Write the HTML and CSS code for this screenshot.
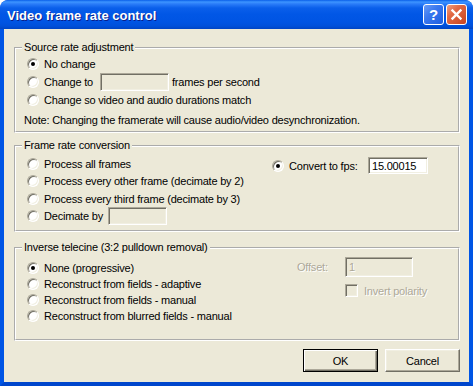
FILE: index.html
```html
<!DOCTYPE html>
<html lang="en">
<head>
    <meta charset="UTF-8">
    <title>Video frame rate control</title>
    <link rel="stylesheet" href="styles.css">
</head>
<body>
    <div class="window">
        <div class="titlebar">
            <span class="title">Video frame rate control</span>
            <div class="caption-buttons">
                <span class="cap-btn help">?</span>
                <span class="cap-btn close">
                    <svg width="21" height="21" viewBox="0 0 21 21">
                        <path d="M6.5 6.5 L14.5 14.5 M14.5 6.5 L6.5 14.5" stroke="#fff" stroke-width="2.4" stroke-linecap="square"/>
                    </svg>
                </span>
            </div>
        </div>

        <div class="client">
            <fieldset class="group source">
                <legend>Source rate adjustment</legend>
                <div class="row"><span class="radio checked"></span><span>No change</span></div>
                <div class="row">
                    <span class="radio"></span><span class="lbl change-lbl">Change to</span>
                    <span class="edit disabled change-edit"></span>
                    <span class="after">frames per second</span>
                </div>
                <div class="row"><span class="radio"></span><span>Change so video and audio durations match</span></div>
                <div class="note">Note: Changing the framerate will cause audio/video desynchronization.</div>
            </fieldset>

            <fieldset class="group conversion">
                <legend>Frame rate conversion</legend>
                <div class="cols conv-cols">
                    <div class="col">
                        <div class="row h17"><span class="radio"></span><span>Process all frames</span></div>
                        <div class="row h18"><span class="radio"></span><span>Process every other frame (decimate by 2)</span></div>
                        <div class="row h17"><span class="radio"></span><span>Process every third frame (decimate by 3)</span></div>
                        <div class="row h18">
                            <span class="radio"></span><span class="lbl decimate-lbl">Decimate by</span>
                            <span class="edit disabled decimate-edit"></span>
                        </div>
                    </div>
                    <div class="col">
                        <div class="row fps-row">
                            <span class="radio checked"></span><span class="lbl fps-lbl">Convert to fps:</span>
                            <span class="edit fps-edit">15.00015</span>
                        </div>
                    </div>
                </div>
            </fieldset>

            <fieldset class="group telecine">
                <legend>Inverse telecine (3:2 pulldown removal)</legend>
                <div class="cols ivtc-cols">
                    <div class="col">
                        <div class="row h16"><span class="radio checked"></span><span>None (progressive)</span></div>
                        <div class="row h16"><span class="radio"></span><span>Reconstruct from fields - adaptive</span></div>
                        <div class="row h16"><span class="radio"></span><span>Reconstruct from fields - manual</span></div>
                        <div class="row h16"><span class="radio"></span><span>Reconstruct from blurred fields - manual</span></div>
                    </div>
                    <div class="col">
                        <div class="row offset-row">
                            <span class="lbl offset-lbl dim">Offset:</span>
                            <span class="edit disabled offset-edit dim">1</span>
                        </div>
                        <div class="row invert-row">
                            <span class="check disabled"></span><span class="dim">Invert polarity</span>
                        </div>
                    </div>
                </div>
            </fieldset>

            <div class="buttons">
                <button class="btn default">OK</button>
                <button class="btn">Cancel</button>
            </div>
        </div>
    </div>
</body>
</html>
```

FILE: styles.css
```css
body {
    margin: 0;
    font-family: "Liberation Sans", Arial, sans-serif;
    font-size: 11px;
    letter-spacing: -0.2px;
    color: #000;
    background: #fff;
}

.window {
    width: 473px;
    height: 386px;
    display: flex;
    flex-direction: column;
    background: #0055e5;
    border-radius: 8px 8px 0 0;
    overflow: hidden;
}

/* title bar */
.titlebar {
    height: 29px;
    flex: none;
    display: flex;
    align-items: center;
    justify-content: space-between;
    padding: 0 6px 0 7px;
    border-radius: 8px 8px 0 0;
    background: linear-gradient(#0a5fe9 0, #3d95ff 2px, #2a7cf8 4px, #0a5fea 8px, #0157e6 14px, #0054e3 22px, #0050da 26px, #0044c4 29px);
}

.title {
    color: #fff;
    font-weight: bold;
    font-size: 13px;
    letter-spacing: 0;
    text-shadow: 1px 1px 0 #0a1e8a;
    padding-top: 1px;
}

.caption-buttons {
    display: flex;
    gap: 2px;
}

.cap-btn {
    width: 21px;
    height: 21px;
    box-sizing: border-box;
    border: 1px solid #fff;
    border-radius: 3px;
    display: flex;
    align-items: center;
    justify-content: center;
}

.cap-btn svg {
    margin: -1px;
}

.help {
    color: #fff;
    font-weight: bold;
    font-size: 15px;
    background: linear-gradient(135deg, #6a9cf6 0, #3a78ef 40%, #1f5ee0 100%);
}

.close {
    background: linear-gradient(135deg, #f0a080 0, #e26a45 35%, #c9441f 100%);
}

/* client area */
.client {
    flex: 1;
    background: #ece9d8;
    border: solid #0055e5;
    border-width: 0 4px 4px;
    border-bottom-color: #0046cc;
    padding: 12px 9px 0 10px;
}

.group {
    margin: 0;
    min-width: 0;
    border: 2px groove #fff;
    padding: 0 6px;
}

.group legend {
    padding: 0 2px;
    line-height: 13px;
    height: 13px;
}

.source {
    padding-top: 1px;
    padding-bottom: 2px;
}

.conversion {
    margin-top: 6px;
    padding-top: 3px;
    padding-bottom: 5px;
}

.telecine {
    margin-top: 9px;
    padding-top: 6px;
    padding-bottom: 15px;
}

.row {
    display: flex;
    align-items: center;
    height: 18px;
    padding-left: 5px;
    white-space: nowrap;
}

.h16 { height: 16px; }
.h17 { height: 17px; }
.h18 { height: 18px; }

.note {
    margin: 2px 0 0 2px;
    height: 18px;
    line-height: 18px;
}

.cols {
    display: grid;
    padding-left: 5px;
}

.cols .row {
    padding-left: 0;
}

.conv-cols {
    grid-template-columns: 245px 1fr;
}

.ivtc-cols {
    grid-template-columns: 270px 1fr;
}

/* controls */
.radio {
    width: 12px;
    height: 12px;
    box-sizing: border-box;
    border-radius: 50%;
    border: 1px solid;
    border-color: #aca899 #fff #fff #aca899;
    background: #fff;
    box-shadow: inset 1px 1px 0 #716f64, inset -1px -1px 0 #f1efe2;
    margin-right: 5px;
    flex: none;
    display: flex;
    align-items: center;
    justify-content: center;
}

.radio.checked::after {
    content: "";
    width: 4px;
    height: 4px;
    border-radius: 50%;
    background: #000;
}

.check {
    width: 13px;
    height: 13px;
    box-sizing: border-box;
    border: 1px solid;
    border-color: #aca899 #fff #fff #aca899;
    box-shadow: inset 1px 1px 0 #716f64, inset -1px -1px 0 #f1efe2;
    background: #fff;
    margin-right: 6px;
    flex: none;
}

.check.disabled {
    background: #ece9d8;
}

.edit {
    box-sizing: border-box;
    height: 18px;
    border: 1px solid;
    border-color: #aca899 #fff #fff #aca899;
    box-shadow: inset 1px 1px 0 #716f64, inset -1px -1px 0 #f1efe2;
    background: #fff;
    padding: 1px 3px 0;
    line-height: 14px;
    flex: none;
}

.edit.disabled {
    background: #ece9d8;
}

.lbl {
    flex: none;
}

.change-lbl { width: 56px; }
.change-edit { width: 69px; }
.after { margin-left: 3px; }

.decimate-lbl { width: 64px; }
.decimate-edit { width: 59px; }

.fps-row {
    height: 17px;
    margin-top: 2px;
}
.fps-lbl { width: 79px; }
.fps-edit { width: 60px; height: 17px; }

.offset-row {
    height: 20px;
    margin-top: -3px;
}
.offset-lbl { width: 48px; }
.offset-edit { width: 68px; height: 20px; padding-top: 2px; }

.invert-row {
    height: 13px;
    margin-top: 7px;
    margin-left: 48px;
}

.dim {
    color: #aca899;
    text-shadow: 1px 1px 0 #fff;
}

/* dialog buttons */
.buttons {
    display: flex;
    justify-content: flex-end;
    gap: 7px;
    margin-top: 8px;
}

.btn {
    width: 75px;
    height: 23px;
    box-sizing: border-box;
    font-family: inherit;
    font-size: 11px;
    letter-spacing: inherit;
    color: #000;
    background: #ece9d8;
    border: 1px solid;
    border-color: #fff #716f64 #716f64 #fff;
    box-shadow: inset -1px -1px 0 #aca899, inset 1px 1px 0 #f1efe2;
    padding: 0;
}

.btn.default {
    border: 1px solid #000;
    box-shadow: inset 1px 1px 0 #fff, inset -1px -1px 0 #716f64, inset -2px -2px 0 #aca899;
}
```
